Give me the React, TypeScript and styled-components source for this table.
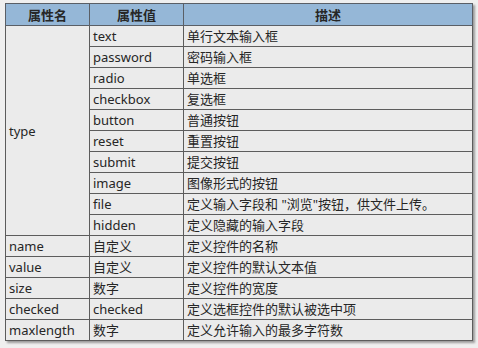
import React from "react";
import styled, { createGlobalStyle } from "styled-components";

type Row = { value: string; desc: string };

const typeRows: Row[] = [
    { value: "text", desc: "单行文本输入框" },
    { value: "password", desc: "密码输入框" },
    { value: "radio", desc: "单选框" },
    { value: "checkbox", desc: "复选框" },
    { value: "button", desc: "普通按钮" },
    { value: "reset", desc: "重置按钮" },
    { value: "submit", desc: "提交按钮" },
    { value: "image", desc: "图像形式的按钮" },
    { value: "file", desc: "定义输入字段和 \"浏览\"按钮，供文件上传。" },
    { value: "hidden", desc: "定义隐藏的输入字段" },
];

const otherRows = [
    { name: "name", value: "自定义", desc: "定义控件的名称" },
    { name: "value", value: "自定义", desc: "定义控件的默认文本值" },
    { name: "size", value: "数字", desc: "定义控件的宽度" },
    { name: "checked", value: "checked", desc: "定义选框控件的默认被选中项" },
    { name: "maxlength", value: "数字", desc: "定义允许输入的最多字符数" },
];

const GlobalStyle = createGlobalStyle`
    html, body {
        margin: 0;
        padding: 0;
        background: #efefef;
    }
    body {
        font-family: "Noto Sans", "Noto Sans CJK SC", sans-serif;
    }
`;

export default function App() {
    return (
        <>
            <GlobalStyle />
            <Page>
                <Table>
                    <colgroup>
                        <col style={{ width: 84 }} />
                        <col style={{ width: 94 }} />
                        <col />
                    </colgroup>
                    <thead>
                        <tr>
                            <HeadCell>属性名</HeadCell>
                            <HeadCell>属性值</HeadCell>
                            <HeadCell>描述</HeadCell>
                        </tr>
                    </thead>
                    <tbody>
                        {typeRows.map((r, i) => (
                            <tr key={r.value}>
                                {i === 0 && (
                                    <Cell rowSpan={typeRows.length}>type</Cell>
                                )}
                                <Cell>{r.value}</Cell>
                                <Cell>{r.desc}</Cell>
                            </tr>
                        ))}
                        {otherRows.map((r) => (
                            <tr key={r.name}>
                                <Cell>{r.name}</Cell>
                                <Cell>{r.value}</Cell>
                                <Cell>{r.desc}</Cell>
                            </tr>
                        ))}
                    </tbody>
                </Table>
            </Page>
        </>
    );
}

const Page = styled.div`
    padding: 3px 0 0 5px;
    width: 478px;
    height: 348px;
    box-sizing: border-box;
`;

const Table = styled.table`
    width: 468px;
    border-collapse: collapse;
    table-layout: fixed;
    background: #ebebeb;
    box-shadow: 2px 2px 2px rgba(0, 0, 0, 0.35);
    color: #262626;
    font-size: 13px;
`;

const HeadCell = styled.th`
    height: 21px;
    padding: 0;
    background: #95b7d7;
    border: 1px solid #5a5f66;
    font-weight: bold;
    text-align: center;
    line-height: 20px;
`;

const Cell = styled.td`
    height: 20px;
    padding: 0 0 0 3px;
    border: 1px solid #5c5c5c;
    line-height: 20px;
    white-space: nowrap;
    overflow: hidden;
    vertical-align: middle;
`;
